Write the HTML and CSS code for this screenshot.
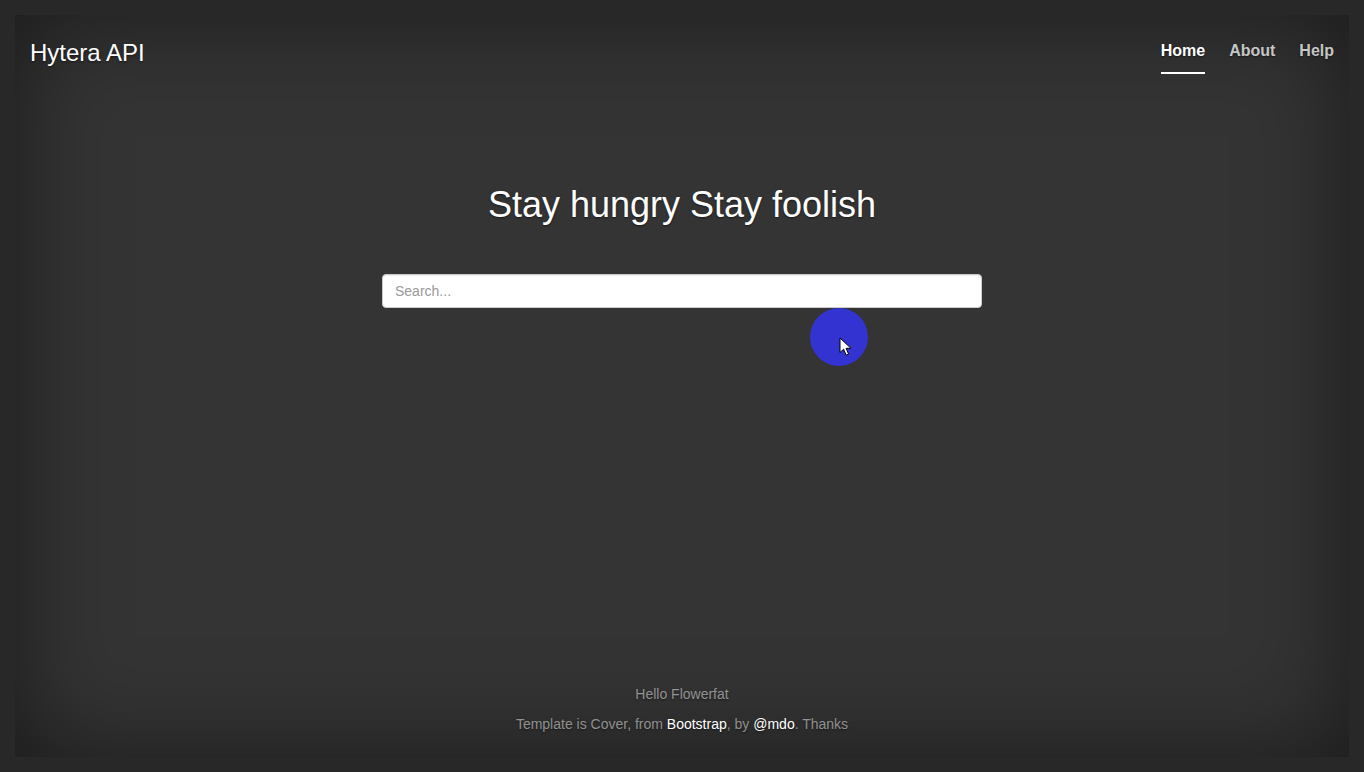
FILE: index.html
```html
<!DOCTYPE html>
<html lang="en">
<head>
<meta charset="utf-8">
<title>Hytera API</title>
<link rel="stylesheet" href="styles.css">
</head>
<body>
<div class="frame">
  <header class="masthead">
    <h3 class="brand">Hytera API</h3>
    <nav class="nav">
      <a class="nav-link active" href="#">Home</a>
      <a class="nav-link" href="#">About</a>
      <a class="nav-link" href="#">Help</a>
    </nav>
  </header>
  <main class="cover">
    <h1 class="cover-heading">Stay hungry Stay foolish</h1>
    <input class="search" type="text" placeholder="Search...">
  </main>
  <footer class="mastfoot">
    <p>Hello Flowerfat</p>
    <p>Template is Cover, from <a href="#">Bootstrap</a>, by <a href="#">@mdo</a>. Thanks</p>
  </footer>
  <div class="cursor-spot">
    <svg class="cursor" width="14" height="20" viewBox="0 0 14 20">
      <path d="M1 1 L1 15.5 L4.6 12.2 L7.2 18.2 L9.6 17.1 L7.1 11.3 L12 11.3 Z" fill="#fff" stroke="#000" stroke-width="1" stroke-linejoin="round"/>
    </svg>
  </div>
</div>
</body>
</html>
```
FILE: styles.css
```css
* { box-sizing: border-box; }
html, body { height: 100%; }
body {
  margin: 0;
  padding: 15px;
  background: #282828;
  font-family: "Liberation Sans", Arial, sans-serif;
  color: #fff;
  text-shadow: 0 1px 2px rgba(0,0,0,.5);
}
.frame {
  position: relative;
  height: 742px;
  background: #343434;
  box-shadow: inset 0 0 100px rgba(0,0,0,.5);
  display: flex;
  flex-direction: column;
  padding: 0 15px;
}
.masthead {
  display: flex;
  justify-content: space-between;
  align-items: flex-start;
  padding-top: 25px;
}
.brand {
  margin: 0;
  font-size: 24px;
  font-weight: normal;
  line-height: 26.4px;
}
.nav {
  display: flex;
  gap: 24px;
}
.nav-link {
  display: block;
  padding: 1px 0 11px;
  font-size: 16px;
  line-height: 20px;
  font-weight: bold;
  color: rgba(255,255,255,.75);
  text-decoration: none;
  border-bottom: 2px solid transparent;
}
.nav-link.active {
  color: #fff;
  border-bottom-color: #fff;
}
.cover {
  display: flex;
  flex-direction: column;
  align-items: center;
  padding-top: 111px;
}
.cover-heading {
  margin: 0 0 49px;
  font-size: 36px;
  line-height: 39.6px;
  font-weight: normal;
}
.search {
  width: 600px;
  height: 34px;
  padding: 6px 12px;
  font-family: "Liberation Sans", Arial, sans-serif;
  font-size: 14px;
  color: #555;
  background: #fff;
  border: 1px solid #ccc;
  border-radius: 4px;
  box-shadow: inset 0 1px 1px rgba(0,0,0,.075);
  outline: none;
}
.search::placeholder { color: #999; }
.mastfoot {
  margin-top: auto;
  padding-bottom: 23px;
  text-align: center;
  color: rgba(255,255,255,.5);
  font-size: 14px;
  line-height: 20px;
  display: flex;
  flex-direction: column;
  gap: 10px;
}
.mastfoot p { margin: 0; }
.mastfoot a { color: #fff; text-decoration: none; }
.cursor-spot {
  position: absolute;
  left: 795px;
  top: 293px;
  width: 58px;
  height: 58px;
  border-radius: 50%;
  background: #3333d2;
}
.cursor {
  position: absolute;
  left: 29px;
  top: 29px;
}
```
